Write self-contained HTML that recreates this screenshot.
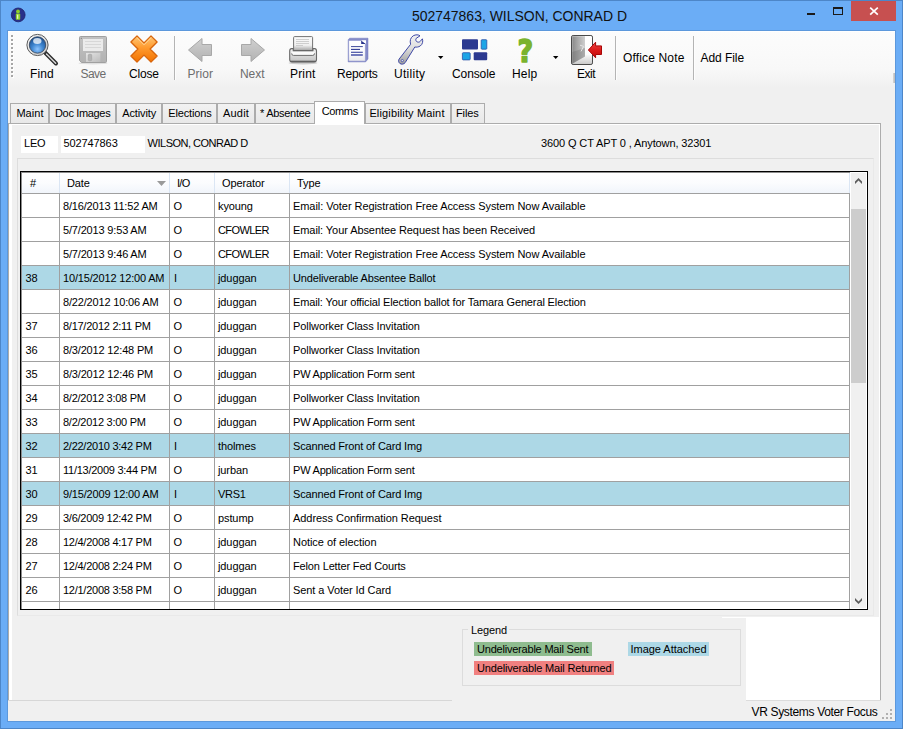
<!DOCTYPE html><html><head><meta charset="utf-8"><title>502747863, WILSON, CONRAD D</title><style>
html,body{margin:0;padding:0;background:#fff;}
body{width:904px;height:730px;position:relative;overflow:hidden;font-family:"Liberation Sans",sans-serif;}
.a{position:absolute;}
.t{position:absolute;white-space:pre;line-height:20px;height:20px;font-family:"Liberation Sans",sans-serif;}
#win{left:0;top:0;width:901px;height:727px;border:1px solid #4d86c8;background:#6badf6;}
#inner{left:7px;top:30px;width:887px;height:690px;border:1px solid #5c98dc;background:#f0f0f0;}
#tb{left:8px;top:31px;width:887px;height:57px;background:linear-gradient(#fcfcfc 0%,#fafafa 40%,#f8f8f8 68%,#f0f0f0 100%);}
.sep{position:absolute;width:1px;top:36px;height:44px;background:#b4b4b4;box-shadow:1px 0 0 #fdfdfd;}
.tab{position:absolute;top:103px;height:20px;border:1px solid #acacac;border-bottom:none;background:linear-gradient(#f2f2f2,#e8e8e8);box-sizing:border-box;}
.tab.act{top:101px;height:23px;background:#fff;z-index:3;}
.row{position:absolute;left:22px;width:828px;height:23px;border-bottom:1px solid #a0a0a0;background:#fff;}
.row.hl{background:#add8e6;}
.vl{position:absolute;top:193px;width:1px;height:416px;background:#a0a0a0;}
</style></head><body>
<div id="win" class="a"></div>
<div id="inner" class="a"></div>
<svg class="a" style="left:10px;top:7px" width="16" height="16" viewBox="0 0 16 16"><circle cx="8.2" cy="7.9" r="6.9" fill="#28308a" stroke="#1f1f68" stroke-width="0.8"/><circle cx="8" cy="4.4" r="1.9" fill="#8fd128"/><rect x="5.8" y="6.6" width="4.4" height="6.2" rx="0.8" fill="#8fd128"/><rect x="7.1" y="7.6" width="1.2" height="4.2" fill="#eaf6c8"/></svg>
<span class="t" style="left:412px;top:5.7px;font-size:14px;letter-spacing:-0.02px;color:#111;">502747863, WILSON, CONRAD D</span>
<div class="a" style="left:807px;top:13px;width:8px;height:2px;background:#1a1a1a"></div>
<div class="a" style="left:833px;top:7px;width:8px;height:5px;border:1px solid #1a1a1a;border-top-width:2px"></div>
<div class="a" style="left:851px;top:1px;width:45px;height:20px;background:#c75050"></div>
<svg class="a" style="left:869px;top:6px" width="10" height="10" viewBox="0 0 10 10"><path d="M1.2 1.7 L8.8 8.7 M8.8 1.7 L1.2 8.7" stroke="#fff" stroke-width="1.7" fill="none"/></svg>
<div id="tb" class="a"></div>
<div class="a" style="left:8px;top:31px;width:887px;height:1px;background:#fff"></div>
<div class="a" style="left:893px;top:73px;width:2px;height:10px;background:linear-gradient(90deg,#d8d8d8,#b8b8b8)"></div>
<div class="a" style="left:11px;top:35px;width:2px;height:2px;background:#a6a6a6;box-shadow:1px 1px 0 #fff"></div><div class="a" style="left:11px;top:39px;width:2px;height:2px;background:#a6a6a6;box-shadow:1px 1px 0 #fff"></div><div class="a" style="left:11px;top:43px;width:2px;height:2px;background:#a6a6a6;box-shadow:1px 1px 0 #fff"></div><div class="a" style="left:11px;top:47px;width:2px;height:2px;background:#a6a6a6;box-shadow:1px 1px 0 #fff"></div><div class="a" style="left:11px;top:51px;width:2px;height:2px;background:#a6a6a6;box-shadow:1px 1px 0 #fff"></div><div class="a" style="left:11px;top:55px;width:2px;height:2px;background:#a6a6a6;box-shadow:1px 1px 0 #fff"></div><div class="a" style="left:11px;top:59px;width:2px;height:2px;background:#a6a6a6;box-shadow:1px 1px 0 #fff"></div><div class="a" style="left:11px;top:63px;width:2px;height:2px;background:#a6a6a6;box-shadow:1px 1px 0 #fff"></div><div class="a" style="left:11px;top:67px;width:2px;height:2px;background:#a6a6a6;box-shadow:1px 1px 0 #fff"></div><div class="a" style="left:11px;top:71px;width:2px;height:2px;background:#a6a6a6;box-shadow:1px 1px 0 #fff"></div><div class="a" style="left:11px;top:75px;width:2px;height:2px;background:#a6a6a6;box-shadow:1px 1px 0 #fff"></div>
<svg class="a" style="left:24px;top:32px" width="36" height="36" viewBox="24 32 36 36">
<defs>
<radialGradient id="lens" cx="0.5" cy="0.75" r="0.75"><stop offset="0" stop-color="#8cc4ff"/><stop offset="0.45" stop-color="#3f86d0"/><stop offset="1" stop-color="#174a8c"/></radialGradient>
<linearGradient id="ring" x1="0" y1="0" x2="1" y2="1"><stop offset="0" stop-color="#ffffff"/><stop offset="1" stop-color="#c4c4c4"/></linearGradient>
</defs>
<path d="M45 52.5 L56 63.5" stroke="#2b2b2b" stroke-width="4" stroke-linecap="round"/>
<path d="M46.5 54 L55.7 63.2" stroke="#dcdcdc" stroke-width="1.4" stroke-linecap="round"/>
<circle cx="37.5" cy="45" r="10.6" fill="url(#ring)" stroke="#5a5a5a" stroke-width="1"/>
<circle cx="37.5" cy="45" r="8.2" fill="url(#lens)" stroke="#3a4a60" stroke-width="0.9"/>
<ellipse cx="37.3" cy="41" rx="4.2" ry="3" fill="#ffffff" opacity="0.75"/>
</svg>
<svg class="a" style="left:77px;top:35px" width="32" height="31" viewBox="77 35 32 31">
<defs><linearGradient id="fl" x1="0" y1="0" x2="0" y2="1"><stop offset="0" stop-color="#c2c2c2"/><stop offset="1" stop-color="#b2b2b2"/></linearGradient>
<linearGradient id="fs" x1="0" y1="0" x2="1" y2="1"><stop offset="0" stop-color="#e4e4e4"/><stop offset="1" stop-color="#bcbcbc"/></linearGradient></defs>
<ellipse cx="93" cy="63.2" rx="14.5" ry="1.3" fill="#000" opacity="0.1"/>
<path d="M80.5 36.5 H105.5 Q106.5 36.5 106.5 37.5 V61.5 Q106.5 62.5 105.5 62.5 H81.5 L79.5 60.5 V37.5 Q79.5 36.5 80.5 36.5 Z" fill="url(#fl)" stroke="#a0a0a0" stroke-width="1"/>
<rect x="83" y="39" width="20" height="12" fill="#ebebeb"/>
<path d="M85 41.5 H101 M85 44.5 H101 M85 47.5 H101" stroke="#d2d2d2" stroke-width="0.8"/>
<rect x="86" y="53" width="14.4" height="9" fill="url(#fs)"/>
<rect x="88.3" y="54.3" width="3.4" height="6.4" rx="1" fill="#b4b4b4" stroke="#a0a0a0" stroke-width="0.6"/>
<rect x="80.8" y="37.8" width="1.2" height="1.2" fill="#8e8e8e"/>
</svg>
<svg class="a" style="left:129px;top:34px" width="30" height="30" viewBox="-1 -1 30 30">
<defs><linearGradient id="ox" x1="0" y1="0" x2="0" y2="1"><stop offset="0" stop-color="#ffc878"/><stop offset="0.45" stop-color="#ff9a2e"/><stop offset="1" stop-color="#f27200"/></linearGradient></defs>
<path d="M7 0.9 L14 7.9 L21 0.9 L27.1 7 L20.1 14 L27.1 21 L21 27.1 L14 20.1 L7 27.1 L0.9 21 L7.9 14 L0.9 7 Z" fill="url(#ox)" stroke="#d8650c" stroke-width="1.3" stroke-linejoin="round"/>
<path d="M7 2.8 L14 9.8 L21 2.8" stroke="#ffe2b0" stroke-width="1" fill="none" opacity="0.7"/>
</svg>
<svg class="a" style="left:186px;top:36px" width="30" height="28" viewBox="186 36 30 28">
<defs><linearGradient id="ga" x1="0" y1="0" x2="0" y2="1"><stop offset="0" stop-color="#d0d0d0"/><stop offset="1" stop-color="#b2b2b2"/></linearGradient></defs>
<path d="M188.5 50 L202 38.5 V44.5 H211.5 V55.5 H202 V61.5 Z" fill="url(#ga)" stroke="#a8a8a8" stroke-width="1" stroke-linejoin="round"/>
</svg>
<svg class="a" style="left:238px;top:36px" width="30" height="28" viewBox="238 36 30 28">
<path d="M264.5 50 L251 38.5 V44.5 H241.5 V55.5 H251 V61.5 Z" fill="url(#ga)" stroke="#a8a8a8" stroke-width="1" stroke-linejoin="round"/>
</svg>
<svg class="a" style="left:287px;top:34px" width="32" height="32" viewBox="287 34 32 32">
<defs>
<linearGradient id="pb" x1="0" y1="0" x2="0" y2="1"><stop offset="0" stop-color="#f6f6f6"/><stop offset="0.5" stop-color="#dadada"/><stop offset="1" stop-color="#c2c2c2"/></linearGradient>
<linearGradient id="pp" x1="0" y1="0" x2="0" y2="1"><stop offset="0" stop-color="#fbfbfb"/><stop offset="0.6" stop-color="#f0f0f0"/><stop offset="1" stop-color="#9c9c9c"/></linearGradient>
</defs>
<ellipse cx="303" cy="63" rx="14.5" ry="1.4" fill="#000" opacity="0.18"/>
<path d="M293.6 51 V37.6 Q293.6 36.6 294.6 36.6 H311.6 Q312.6 36.6 312.6 37.6 V51 Z" fill="url(#pp)" stroke="#727272" stroke-width="1"/>
<path d="M296 39.5 H309 M296 41.5 H309 M296 43.5 H309 M296 45.5 H303" stroke="#c4c4c4" stroke-width="0.8"/>
<path d="M293.2 48.6 H291.6 Q289.7 48.6 289.7 51 V59.6 Q289.7 62 292 62 H314.2 Q316.5 62 316.5 59.6 V51 Q316.5 48.6 314.6 48.6 H313 V50.6 H293.2 Z" fill="url(#pb)" stroke="#686868" stroke-width="1.1" stroke-linejoin="round"/>
<path d="M290.4 61.4 H315.8" stroke="#606060" stroke-width="1.4"/>
<path d="M291.6 52 H314.6 V53.6 Q314.6 55.2 313 55.2 H293.2 Q291.6 55.2 291.6 53.6 Z" fill="#fbfbfb"/>
<path d="M291.7 53.4 Q291.7 55.4 293.4 55.4 H312.8 Q314.5 55.4 314.5 53.4" fill="none" stroke="#6e6e6e" stroke-width="1"/>
</svg>
<svg class="a" style="left:346px;top:36px" width="26" height="28" viewBox="346 36 26 28">
<defs><linearGradient id="pg" x1="0" y1="0" x2="0" y2="1"><stop offset="0" stop-color="#ffffff"/><stop offset="0.6" stop-color="#fbfbfd"/><stop offset="1" stop-color="#e9e9ec"/></linearGradient></defs>
<path d="M349.6 38.2 H368 V59 L365.6 61.9 H348.2 V39.8 Z" fill="#858bc8" stroke="#7077bd" stroke-width="0.5" stroke-linejoin="round"/>
<path d="M348.6 40.4 H365.4 V61.2 H348.6 Z" fill="url(#pg)" stroke="#8c92cc" stroke-width="0.7"/>
<path d="M361.2 40.4 L366 44 H361.2 Z" fill="#27328c"/>
<path d="M361.2 40.2 H366 V44 Z" fill="#ffffff"/>
<path d="M351 46.6 H362.8" stroke="#2a3590" stroke-width="0.9"/>
<path d="M351 49.4 H360" stroke="#2f3a94" stroke-width="1.1"/>
<path d="M351 52.3 H362.8" stroke="#4650a4" stroke-width="1.2"/>
<path d="M351 55 H362.8" stroke="#5a64b2" stroke-width="1.7"/>
</svg>
<svg class="a" style="left:396px;top:33px" width="30" height="33" viewBox="396 33 30 33">
<defs><linearGradient id="wr" x1="0" y1="0" x2="0" y2="1"><stop offset="0" stop-color="#f2f2f2"/><stop offset="0.45" stop-color="#dedede"/><stop offset="1" stop-color="#9e9e9e"/></linearGradient></defs>
<path d="M399.2 59 L410.6 44.3 C409.6 41 410.4 37.6 413.2 35.8 C415.6 34.4 418.6 34.6 420 35.8 L416.2 38.4 C415.4 39.6 415.8 41.2 417 41.8 C418.2 42.4 419.4 42.2 420.2 41.4 L422.4 38.8 C423.2 41.2 422.6 44.4 420.2 46 C418.6 47 416.6 47.4 414.8 47 L405.2 62.6 C403.8 64.4 401.4 64.6 399.8 63.4 C398.4 62.2 398.2 60.4 399.2 59 Z" fill="url(#wr)" stroke="#3f49a6" stroke-width="1" stroke-linejoin="round"/>
<circle cx="402.3" cy="60.6" r="1.1" fill="#f4f4f4" stroke="#3f49a6" stroke-width="0.8"/>
</svg>
<svg class="a" style="left:461px;top:38px" width="28" height="24" viewBox="461 38 28 24">
<rect x="462" y="39.3" width="16" height="10.3" rx="1" fill="#2b3990"/>
<rect x="481.2" y="39.7" width="5.6" height="9.5" rx="0.8" fill="#1da5e6" stroke="#2a50a8" stroke-width="0.8"/>
<rect x="462.4" y="52.7" width="7.8" height="7.2" rx="0.8" fill="#1da5e6" stroke="#2a50a8" stroke-width="0.8"/>
<rect x="473.7" y="52.3" width="13.5" height="8" rx="1" fill="#2b3990"/>
</svg>
<svg class="a" style="left:514px;top:34px" width="24" height="32" viewBox="514 34 24 32">
<defs><linearGradient id="hq" x1="0" y1="0" x2="0" y2="1"><stop offset="0" stop-color="#94cc38"/><stop offset="1" stop-color="#62992a"/></linearGradient></defs>
<g transform="translate(525.3 62) scale(0.86 1)"><text x="0" y="0" text-anchor="middle" font-family="DejaVu Sans, Liberation Sans, sans-serif" font-weight="bold" font-size="31.5" fill="#7ab32e" stroke="#7ab32e" stroke-width="1.5" stroke-linejoin="round">?</text></g>
</svg>
<svg class="a" style="left:569px;top:33px" width="36" height="34" viewBox="569 33 36 34">
<defs>
<linearGradient id="dr" x1="0" y1="0" x2="1" y2="1"><stop offset="0" stop-color="#9c9c9c"/><stop offset="0.5" stop-color="#bdbdbd"/><stop offset="1" stop-color="#8a8a8a"/></linearGradient>
<linearGradient id="dl" x1="0" y1="0" x2="1" y2="0"><stop offset="0" stop-color="#8a8a8a"/><stop offset="0.6" stop-color="#b4b4b4"/><stop offset="1" stop-color="#cfcfcf"/></linearGradient>
<linearGradient id="dw" x1="0" y1="0" x2="0" y2="1"><stop offset="0" stop-color="#ffffff"/><stop offset="0.65" stop-color="#fbfbfb"/><stop offset="1" stop-color="#c8c8c8"/></linearGradient>
<linearGradient id="ra" x1="0" y1="0" x2="0" y2="1"><stop offset="0" stop-color="#ee4848"/><stop offset="0.5" stop-color="#dc1c1c"/><stop offset="1" stop-color="#c00808"/></linearGradient>
</defs>
<rect x="571.5" y="35.5" width="21" height="29" rx="1.6" fill="url(#dw)" stroke="#4a4a4a" stroke-width="1"/>
<path d="M572.2 36.2 H585 V56.4 L572.2 63.8 Z" fill="url(#dl)"/>
<path d="M572.2 52 L585 48 V56.4 L572.2 63.8 Z" fill="#6e6e6e" opacity="0.35"/>
<path d="M580 45.2 L583.6 46.4 L581 51.4" stroke="#e4e4e4" stroke-width="1" fill="none"/>
<path d="M588.4 50 L595.6 42.2 V45.9 H601.5 V54.5 H595.6 V57.8 Z" fill="url(#ra)" stroke="#a80606" stroke-width="1" stroke-linejoin="round"/>
</svg>

<span class="t" style="left:30px;top:63.8px;font-size:12px;letter-spacing:0.09px;color:#000;">Find</span>
<span class="t" style="left:80.5px;top:63.8px;font-size:12px;letter-spacing:-0.54px;color:#6d6d6d;">Save</span>
<span class="t" style="left:129px;top:63.8px;font-size:12px;letter-spacing:-0.198px;color:#000;">Close</span>
<span class="t" style="left:187.5px;top:63.8px;font-size:12px;letter-spacing:0.032px;color:#6d6d6d;">Prior</span>
<span class="t" style="left:240px;top:63.8px;font-size:12px;letter-spacing:-0.048px;color:#6d6d6d;">Next</span>
<span class="t" style="left:290px;top:63.8px;font-size:12px;letter-spacing:0.182px;color:#000;">Print</span>
<span class="t" style="left:337px;top:63.8px;font-size:12px;letter-spacing:-0.204px;color:#000;">Reports</span>
<span class="t" style="left:394px;top:63.8px;font-size:12px;letter-spacing:0.28px;color:#000;">Utility</span>
<span class="t" style="left:452px;top:63.8px;font-size:12px;letter-spacing:-0.104px;color:#000;">Console</span>
<span class="t" style="left:512px;top:63.8px;font-size:12px;letter-spacing:0.152px;color:#000;">Help</span>
<span class="t" style="left:577px;top:63.8px;font-size:12px;letter-spacing:-0.505px;color:#000;">Exit</span>
<span class="t" style="left:623px;top:47.9px;font-size:12px;letter-spacing:0.154px;color:#000;">Office Note</span>
<span class="t" style="left:700.5px;top:47.9px;font-size:12px;letter-spacing:-0.054px;color:#000;">Add File</span>
<div class="sep" style="left:174px"></div>
<div class="sep" style="left:615px"></div>
<div class="sep" style="left:693px"></div>
<svg class="a" style="left:438px;top:56px" width="6" height="4" viewBox="0 0 6 4"><path d="M0 0 H5.4 L2.7 3 Z" fill="#000"/></svg>
<svg class="a" style="left:553px;top:56px" width="6" height="4" viewBox="0 0 6 4"><path d="M0 0 H5.4 L2.7 3 Z" fill="#000"/></svg>
<div class="a" style="left:8px;top:123px;width:871px;height:576px;border:1px solid #acacac;border-bottom-color:#d4d4d4;background:#fff;box-sizing:content-box"></div>
<div class="tab" style="left:10px;width:39px"></div>
<span class="t" style="left:16.4px;top:103.0px;font-size:11px;letter-spacing:0.038px;color:#000;z-index:4">Maint</span>
<div class="tab" style="left:49px;width:67px"></div>
<span class="t" style="left:55px;top:103.0px;font-size:11px;letter-spacing:-0.34px;color:#000;z-index:4">Doc Images</span>
<div class="tab" style="left:116px;width:46px"></div>
<span class="t" style="left:122.3px;top:103.0px;font-size:11px;letter-spacing:-0.13px;color:#000;z-index:4">Activity</span>
<div class="tab" style="left:162px;width:55px"></div>
<span class="t" style="left:168.2px;top:103.0px;font-size:11px;letter-spacing:-0.138px;color:#000;z-index:4">Elections</span>
<div class="tab" style="left:217px;width:38px"></div>
<span class="t" style="left:223px;top:103.0px;font-size:11px;letter-spacing:0.204px;color:#000;z-index:4">Audit</span>
<div class="tab" style="left:255px;width:60px"></div>
<span class="t" style="left:260px;top:103.0px;font-size:11px;letter-spacing:-0.292px;color:#000;z-index:4">* Absentee</span>
<div class="tab act" style="left:314px;width:51px"></div>
<span class="t" style="left:321.7px;top:101.0px;font-size:11px;letter-spacing:-0.358px;color:#000;z-index:4">Comms</span>
<div class="tab" style="left:365px;width:86px"></div>
<span class="t" style="left:369.4px;top:103.0px;font-size:11px;letter-spacing:0.144px;color:#000;z-index:4">Eligibility Maint</span>
<div class="tab" style="left:451px;width:34px"></div>
<span class="t" style="left:456px;top:103.0px;font-size:11px;letter-spacing:-0.126px;color:#000;z-index:4">Files</span>
<div class="a" style="left:12px;top:125px;width:867px;height:492px;background:#f0f0f0"></div>
<div class="a" style="left:12px;top:617px;width:734px;height:83px;background:#f0f0f0"></div>
<div class="a" style="left:722px;top:617px;width:24px;height:1px;background:#fff"></div>
<div class="a" style="left:8px;top:700px;width:887px;height:21px;background:#f0f0f0"></div>
<div class="a" style="left:8px;top:700px;width:444px;height:1px;background:#d7d7d7"></div>
<div class="a" style="left:746px;top:700px;width:149px;height:1px;background:#dcdcdc"></div>
<div class="a" style="left:881px;top:124px;width:14px;height:577px;background:#f0f0f0"></div>
<span class="t" style="left:751.5px;top:701.6px;font-size:12px;letter-spacing:-0.336px;color:#000;">VR Systems Voter Focus</span>
<div class="a" style="left:890px;top:709px;width:2px;height:2px;background:#b0b0b0"></div><div class="a" style="left:886px;top:713px;width:2px;height:2px;background:#b0b0b0"></div><div class="a" style="left:890px;top:713px;width:2px;height:2px;background:#b0b0b0"></div><div class="a" style="left:882px;top:717px;width:2px;height:2px;background:#b0b0b0"></div><div class="a" style="left:886px;top:717px;width:2px;height:2px;background:#b0b0b0"></div><div class="a" style="left:890px;top:717px;width:2px;height:2px;background:#b0b0b0"></div>
<div class="a" style="left:21px;top:136px;width:37px;height:17px;background:#fff"></div>
<div class="a" style="left:61px;top:136px;width:84px;height:17px;background:#fff"></div>
<span class="t" style="left:24px;top:133.2px;font-size:11px;letter-spacing:-0.2px;color:#000;">LEO</span>
<span class="t" style="left:63.5px;top:133.2px;font-size:11px;letter-spacing:-0.1px;color:#000;">502747863</span>
<span class="t" style="left:147.6px;top:133.2px;font-size:11px;letter-spacing:-0.5px;color:#000;">WILSON, CONRAD D</span>
<span class="t" style="left:541px;top:133.2px;font-size:11px;letter-spacing:-0.11px;color:#000;">3600 Q CT APT 0 , Anytown, 32301</span>
<div class="a" style="left:17px;top:158px;width:855px;height:456px;border:1px solid #dddddd;border-right-color:#e9e9e9;border-bottom-color:#e9e9e9;box-sizing:content-box"></div>
<div class="a" style="left:20px;top:171px;width:846px;height:437px;border:1px solid #000;background:#fff;box-shadow:inset 1px 1px 0 #8c8c8c"></div>
<div class="a" style="left:22px;top:173px;width:828px;height:20px;background:linear-gradient(#ffffff 0%,#fbfcfe 50%,#f1f5fb 100%);border-bottom:1px solid #a0a0a0"></div>
<div class="a" style="left:59px;top:173px;width:1px;height:20px;background:#dbe6f4"></div>
<div class="a" style="left:169px;top:173px;width:1px;height:20px;background:#dbe6f4"></div>
<div class="a" style="left:214px;top:173px;width:1px;height:20px;background:#dbe6f4"></div>
<div class="a" style="left:289px;top:173px;width:1px;height:20px;background:#dbe6f4"></div>
<div class="a" style="left:849px;top:173px;width:1px;height:20px;background:#dbe6f4"></div>
<span class="t" style="left:30px;top:173.0px;font-size:11px;letter-spacing:-0.1px;color:#000;">#</span>
<span class="t" style="left:67px;top:173.0px;font-size:11px;letter-spacing:-0.1px;color:#000;">Date</span>
<span class="t" style="left:177px;top:173.0px;font-size:11px;letter-spacing:-0.7px;color:#000;">I/O</span>
<span class="t" style="left:222px;top:173.0px;font-size:11px;letter-spacing:-0.1px;color:#000;">Operator</span>
<span class="t" style="left:297px;top:173.0px;font-size:11px;letter-spacing:-0.1px;color:#000;">Type</span>
<svg class="a" style="left:157px;top:181px" width="9" height="5" viewBox="0 0 9 5"><path d="M0 0 H9 L4.5 5 Z" fill="#9a9a9a"/></svg>
<div class="row" style="top:194px"></div>
<span class="t" style="left:63px;top:196.0px;font-size:11px;letter-spacing:-0.17px;color:#000;">8/16/2013 11:52 AM</span>
<span class="t" style="left:173.4px;top:196.0px;font-size:11px;letter-spacing:0px;color:#000;">O</span>
<span class="t" style="left:218px;top:196.0px;font-size:11px;letter-spacing:-0.1px;color:#000;">kyoung</span>
<span class="t" style="left:293px;top:196.0px;font-size:11px;letter-spacing:-0.066px;color:#000;">Email: Voter Registration Free Access System Now Available</span>
<div class="row" style="top:218px"></div>
<span class="t" style="left:63px;top:220.0px;font-size:11px;letter-spacing:-0.17px;color:#000;">5/7/2013 9:53 AM</span>
<span class="t" style="left:173.4px;top:220.0px;font-size:11px;letter-spacing:0px;color:#000;">O</span>
<span class="t" style="left:218px;top:220.0px;font-size:11px;letter-spacing:-0.6px;color:#000;">CFOWLER</span>
<span class="t" style="left:293px;top:220.0px;font-size:11px;letter-spacing:-0.08px;color:#000;">Email: Your Absentee Request has been Received</span>
<div class="row" style="top:242px"></div>
<span class="t" style="left:63px;top:244.0px;font-size:11px;letter-spacing:-0.17px;color:#000;">5/7/2013 9:46 AM</span>
<span class="t" style="left:173.4px;top:244.0px;font-size:11px;letter-spacing:0px;color:#000;">O</span>
<span class="t" style="left:218px;top:244.0px;font-size:11px;letter-spacing:-0.6px;color:#000;">CFOWLER</span>
<span class="t" style="left:293px;top:244.0px;font-size:11px;letter-spacing:-0.066px;color:#000;">Email: Voter Registration Free Access System Now Available</span>
<div class="row hl" style="top:266px"></div>
<span class="t" style="left:25.5px;top:268.0px;font-size:11px;letter-spacing:-0.1px;color:#000;">38</span>
<span class="t" style="left:63px;top:268.0px;font-size:11px;letter-spacing:-0.17px;color:#000;">10/15/2012 12:00 AM</span>
<span class="t" style="left:174px;top:268.0px;font-size:11px;letter-spacing:0px;color:#000;">I</span>
<span class="t" style="left:218px;top:268.0px;font-size:11px;letter-spacing:-0.1px;color:#000;">jduggan</span>
<span class="t" style="left:293px;top:268.0px;font-size:11px;letter-spacing:-0.15px;color:#000;">Undeliverable Absentee Ballot</span>
<div class="row" style="top:290px"></div>
<span class="t" style="left:63px;top:292.0px;font-size:11px;letter-spacing:-0.17px;color:#000;">8/22/2012 10:06 AM</span>
<span class="t" style="left:173.4px;top:292.0px;font-size:11px;letter-spacing:0px;color:#000;">O</span>
<span class="t" style="left:218px;top:292.0px;font-size:11px;letter-spacing:-0.1px;color:#000;">jduggan</span>
<span class="t" style="left:293px;top:292.0px;font-size:11px;letter-spacing:-0.13px;color:#000;">Email: Your official Election ballot for Tamara General Election</span>
<div class="row" style="top:314px"></div>
<span class="t" style="left:25.5px;top:316.0px;font-size:11px;letter-spacing:-0.1px;color:#000;">37</span>
<span class="t" style="left:63px;top:316.0px;font-size:11px;letter-spacing:-0.26px;color:#000;">8/17/2012 2:11 PM</span>
<span class="t" style="left:173.4px;top:316.0px;font-size:11px;letter-spacing:0px;color:#000;">O</span>
<span class="t" style="left:218px;top:316.0px;font-size:11px;letter-spacing:-0.1px;color:#000;">jduggan</span>
<span class="t" style="left:293px;top:316.0px;font-size:11px;letter-spacing:-0.08px;color:#000;">Pollworker Class Invitation</span>
<div class="row" style="top:338px"></div>
<span class="t" style="left:25.5px;top:340.0px;font-size:11px;letter-spacing:-0.1px;color:#000;">36</span>
<span class="t" style="left:63px;top:340.0px;font-size:11px;letter-spacing:-0.17px;color:#000;">8/3/2012 12:48 PM</span>
<span class="t" style="left:173.4px;top:340.0px;font-size:11px;letter-spacing:0px;color:#000;">O</span>
<span class="t" style="left:218px;top:340.0px;font-size:11px;letter-spacing:-0.1px;color:#000;">jduggan</span>
<span class="t" style="left:293px;top:340.0px;font-size:11px;letter-spacing:-0.08px;color:#000;">Pollworker Class Invitation</span>
<div class="row" style="top:362px"></div>
<span class="t" style="left:25.5px;top:364.0px;font-size:11px;letter-spacing:-0.1px;color:#000;">35</span>
<span class="t" style="left:63px;top:364.0px;font-size:11px;letter-spacing:-0.17px;color:#000;">8/3/2012 12:46 PM</span>
<span class="t" style="left:173.4px;top:364.0px;font-size:11px;letter-spacing:0px;color:#000;">O</span>
<span class="t" style="left:218px;top:364.0px;font-size:11px;letter-spacing:-0.1px;color:#000;">jduggan</span>
<span class="t" style="left:293px;top:364.0px;font-size:11px;letter-spacing:-0.21px;color:#000;">PW Application Form sent</span>
<div class="row" style="top:386px"></div>
<span class="t" style="left:25.5px;top:388.0px;font-size:11px;letter-spacing:-0.1px;color:#000;">34</span>
<span class="t" style="left:63px;top:388.0px;font-size:11px;letter-spacing:-0.26px;color:#000;">8/2/2012 3:08 PM</span>
<span class="t" style="left:173.4px;top:388.0px;font-size:11px;letter-spacing:0px;color:#000;">O</span>
<span class="t" style="left:218px;top:388.0px;font-size:11px;letter-spacing:-0.1px;color:#000;">jduggan</span>
<span class="t" style="left:293px;top:388.0px;font-size:11px;letter-spacing:-0.08px;color:#000;">Pollworker Class Invitation</span>
<div class="row" style="top:410px"></div>
<span class="t" style="left:25.5px;top:412.0px;font-size:11px;letter-spacing:-0.1px;color:#000;">33</span>
<span class="t" style="left:63px;top:412.0px;font-size:11px;letter-spacing:-0.26px;color:#000;">8/2/2012 3:00 PM</span>
<span class="t" style="left:173.4px;top:412.0px;font-size:11px;letter-spacing:0px;color:#000;">O</span>
<span class="t" style="left:218px;top:412.0px;font-size:11px;letter-spacing:-0.1px;color:#000;">jduggan</span>
<span class="t" style="left:293px;top:412.0px;font-size:11px;letter-spacing:-0.21px;color:#000;">PW Application Form sent</span>
<div class="row hl" style="top:434px"></div>
<span class="t" style="left:25.5px;top:436.0px;font-size:11px;letter-spacing:-0.1px;color:#000;">32</span>
<span class="t" style="left:63px;top:436.0px;font-size:11px;letter-spacing:-0.26px;color:#000;">2/22/2010 3:42 PM</span>
<span class="t" style="left:174px;top:436.0px;font-size:11px;letter-spacing:0px;color:#000;">I</span>
<span class="t" style="left:218px;top:436.0px;font-size:11px;letter-spacing:-0.1px;color:#000;">tholmes</span>
<span class="t" style="left:293px;top:436.0px;font-size:11px;letter-spacing:-0.15px;color:#000;">Scanned Front of Card Img</span>
<div class="row" style="top:458px"></div>
<span class="t" style="left:25.5px;top:460.0px;font-size:11px;letter-spacing:-0.1px;color:#000;">31</span>
<span class="t" style="left:63px;top:460.0px;font-size:11px;letter-spacing:-0.26px;color:#000;">11/13/2009 3:44 PM</span>
<span class="t" style="left:173.4px;top:460.0px;font-size:11px;letter-spacing:0px;color:#000;">O</span>
<span class="t" style="left:218px;top:460.0px;font-size:11px;letter-spacing:-0.1px;color:#000;">jurban</span>
<span class="t" style="left:293px;top:460.0px;font-size:11px;letter-spacing:-0.21px;color:#000;">PW Application Form sent</span>
<div class="row hl" style="top:482px"></div>
<span class="t" style="left:25.5px;top:484.0px;font-size:11px;letter-spacing:-0.1px;color:#000;">30</span>
<span class="t" style="left:63px;top:484.0px;font-size:11px;letter-spacing:-0.17px;color:#000;">9/15/2009 12:00 AM</span>
<span class="t" style="left:174px;top:484.0px;font-size:11px;letter-spacing:0px;color:#000;">I</span>
<span class="t" style="left:218px;top:484.0px;font-size:11px;letter-spacing:-0.3px;color:#000;">VRS1</span>
<span class="t" style="left:293px;top:484.0px;font-size:11px;letter-spacing:-0.15px;color:#000;">Scanned Front of Card Img</span>
<div class="row" style="top:506px"></div>
<span class="t" style="left:25.5px;top:508.0px;font-size:11px;letter-spacing:-0.1px;color:#000;">29</span>
<span class="t" style="left:63px;top:508.0px;font-size:11px;letter-spacing:-0.26px;color:#000;">3/6/2009 12:42 PM</span>
<span class="t" style="left:173.4px;top:508.0px;font-size:11px;letter-spacing:0px;color:#000;">O</span>
<span class="t" style="left:218px;top:508.0px;font-size:11px;letter-spacing:-0.1px;color:#000;">pstump</span>
<span class="t" style="left:293px;top:508.0px;font-size:11px;letter-spacing:-0.05px;color:#000;">Address Confirmation Request</span>
<div class="row" style="top:530px"></div>
<span class="t" style="left:25.5px;top:532.0px;font-size:11px;letter-spacing:-0.1px;color:#000;">28</span>
<span class="t" style="left:63px;top:532.0px;font-size:11px;letter-spacing:-0.26px;color:#000;">12/4/2008 4:17 PM</span>
<span class="t" style="left:173.4px;top:532.0px;font-size:11px;letter-spacing:0px;color:#000;">O</span>
<span class="t" style="left:218px;top:532.0px;font-size:11px;letter-spacing:-0.1px;color:#000;">jduggan</span>
<span class="t" style="left:293px;top:532.0px;font-size:11px;letter-spacing:-0.05px;color:#000;">Notice of election</span>
<div class="row" style="top:554px"></div>
<span class="t" style="left:25.5px;top:556.0px;font-size:11px;letter-spacing:-0.1px;color:#000;">27</span>
<span class="t" style="left:63px;top:556.0px;font-size:11px;letter-spacing:-0.26px;color:#000;">12/4/2008 2:24 PM</span>
<span class="t" style="left:173.4px;top:556.0px;font-size:11px;letter-spacing:0px;color:#000;">O</span>
<span class="t" style="left:218px;top:556.0px;font-size:11px;letter-spacing:-0.1px;color:#000;">jduggan</span>
<span class="t" style="left:293px;top:556.0px;font-size:11px;letter-spacing:-0.15px;color:#000;">Felon Letter Fed Courts</span>
<div class="row" style="top:578px"></div>
<span class="t" style="left:25.5px;top:580.0px;font-size:11px;letter-spacing:-0.1px;color:#000;">26</span>
<span class="t" style="left:63px;top:580.0px;font-size:11px;letter-spacing:-0.26px;color:#000;">12/1/2008 3:58 PM</span>
<span class="t" style="left:173.4px;top:580.0px;font-size:11px;letter-spacing:0px;color:#000;">O</span>
<span class="t" style="left:218px;top:580.0px;font-size:11px;letter-spacing:-0.1px;color:#000;">jduggan</span>
<span class="t" style="left:293px;top:580.0px;font-size:11px;letter-spacing:-0.08px;color:#000;">Sent a Voter Id Card</span>
<div class="vl" style="left:59px"></div>
<div class="vl" style="left:169px"></div>
<div class="vl" style="left:214px"></div>
<div class="vl" style="left:289px"></div>
<div class="vl" style="left:849px"></div>
<div class="a" style="left:850px;top:172px;width:15px;height:435px;background:#f0f0f0;border:1px solid #fff"></div>
<div class="a" style="left:851px;top:209px;width:15px;height:174px;background:#cdcdcd"></div>
<svg class="a" style="left:853px;top:176px" width="12" height="10" viewBox="853 176 12 10"><path d="M855 184.1 L858.5 180.6 L862 184.1 V181.5 L858.5 178 L855 181.5 Z" fill="#5c5c5c"/></svg>
<svg class="a" style="left:853px;top:596px" width="12" height="10" viewBox="853 596 12 10"><path d="M855 598 L858.5 601.5 L862 598 V600.6 L858.5 604.1 L855 600.6 Z" fill="#5c5c5c"/></svg>
<div class="a" style="left:462px;top:629px;width:277px;height:55px;border:1px solid #dcdcdc;box-sizing:content-box"></div>
<div class="a" style="left:468px;top:622px;width:41px;height:14px;background:#f0f0f0"></div>
<span class="t" style="left:471px;top:620.0px;font-size:11px;letter-spacing:-0.1px;color:#000;">Legend</span>
<div class="a" style="left:474px;top:642px;width:118px;height:14px;background:#8fbc8f"></div>
<div class="a" style="left:474px;top:661px;width:140px;height:14px;background:#f08080"></div>
<div class="a" style="left:628px;top:642px;width:81px;height:14px;background:#add8e6"></div>
<span class="t" style="left:477px;top:639.0px;font-size:11px;letter-spacing:-0.21px;color:#000;">Undeliverable Mail Sent</span>
<span class="t" style="left:477px;top:658.0px;font-size:11px;letter-spacing:-0.16px;color:#000;">Undeliverable Mail Returned</span>
<span class="t" style="left:630.5px;top:639.0px;font-size:11px;letter-spacing:-0.03px;color:#000;">Image Attached</span>
</body></html>
